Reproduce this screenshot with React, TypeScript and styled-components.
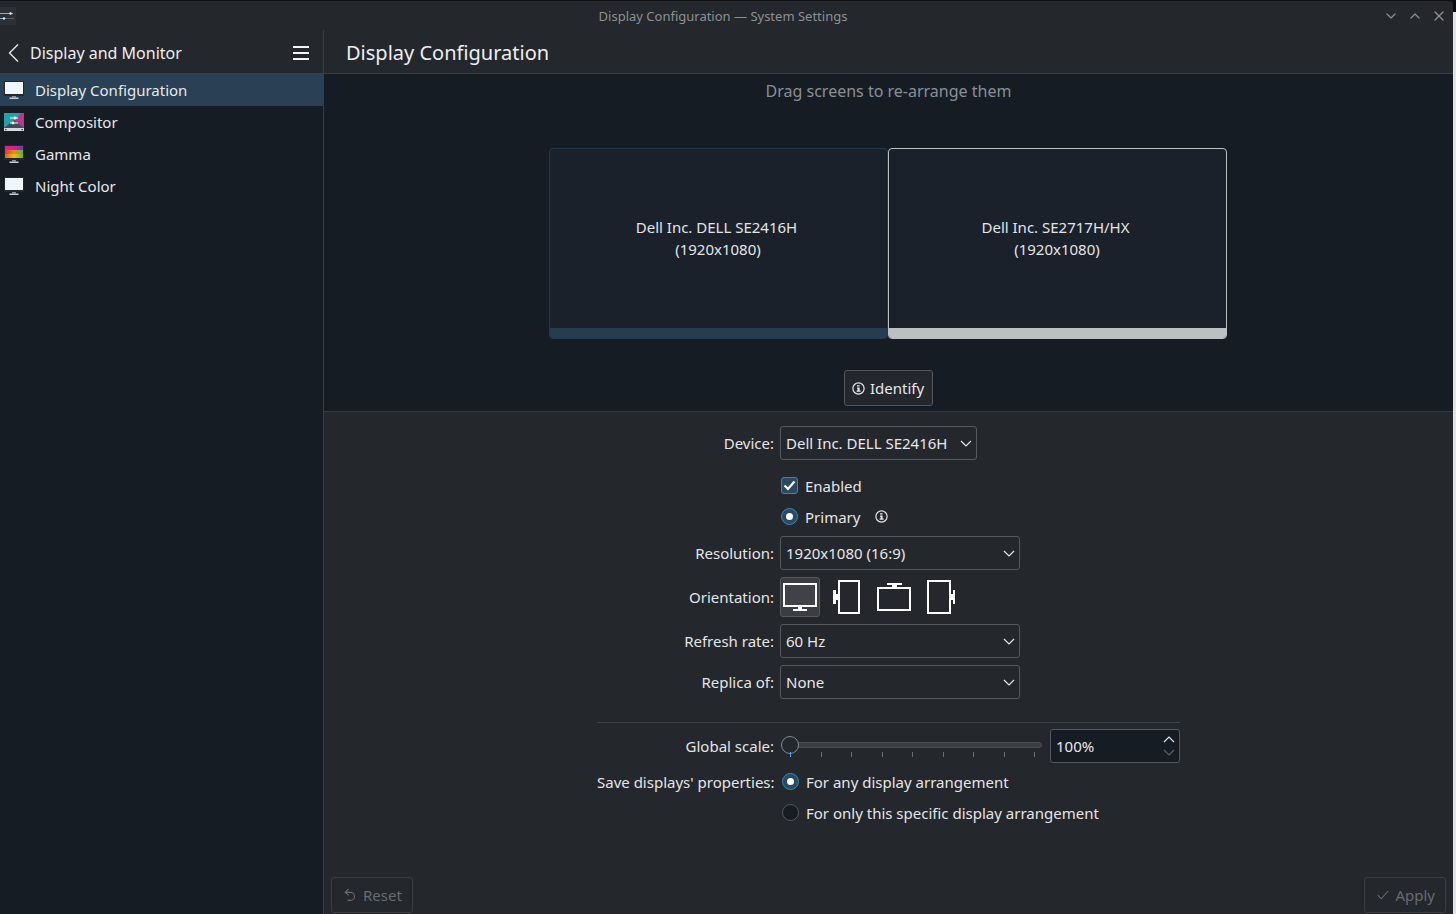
import styled, { createGlobalStyle } from "styled-components";
import { ChevronDown, ChevronUp, X } from "lucide-react";

const GlobalStyle = createGlobalStyle`
  html, body {
    margin: 0;
    padding: 0;
    background: #0c0d0f;
  }
  body {
    font-family: "Noto Sans", "Open Sans", sans-serif;
    font-size: 15px;
    color: #e6e8ea;
  }
  * {
    box-sizing: border-box;
  }
`;

const Screen = styled.div`
  display: flex;
  width: 1456px;
  height: 914px;
  overflow: hidden;
`;

const Window = styled.div`
  display: flex;
  flex-direction: column;
  width: 1453px;
  height: 914px;
  background: #24272c;
  border-top: 1px solid #111214;
  border-top-right-radius: 4px;
`;

const EdgeStrip = styled.div`
  width: 3px;
  background: linear-gradient(#0c0d0f 12px, #e4e5e7 12px);
`;

const TitleBar = styled.div`
  position: relative;
  flex: none;
  display: flex;
  align-items: center;
  justify-content: center;
  height: 29px;
  padding-right: 7px;
  font-size: 13px;
  color: #8d9093;
`;

const AppIcon = styled.svg`
  position: absolute;
  left: 0;
  top: 6px;
`;

const WindowButtons = styled.div`
  position: absolute;
  right: 6px;
  top: 7px;
  display: flex;
  gap: 8px;
  color: #8d9093;
`;

const Body = styled.div`
  flex: 1;
  display: flex;
  min-height: 0;
`;

const Sidebar = styled.aside`
  flex: none;
  display: flex;
  flex-direction: column;
  width: 324px;
  border-right: 1px solid #3a3d42;
  background: #161c24;
`;

const HeaderBar = styled.header`
  flex: none;
  display: flex;
  align-items: center;
  height: 44px;
  padding-top: 2px;
  background: #24272c;
  border-bottom: 1px solid #3a3d42;
`;

const BackButton = styled.span`
  display: flex;
  width: 30px;
  padding-left: 8px;
  color: #e6e8ea;
`;

const SidebarTitle = styled.span`
  flex: 1;
  font-size: 16px;
  color: #eceef0;
`;

const MenuButton = styled.span`
  display: flex;
  margin-right: 14px;
  color: #f4f5f6;
`;

const NavList = styled.nav`
  display: flex;
  flex-direction: column;
`;

const NavItem = styled.div<{ $active?: boolean }>`
  display: flex;
  align-items: center;
  gap: 11px;
  height: 32px;
  padding-left: 4px;
  background: ${(p) => (p.$active ? "#2a4054" : "transparent")};
  color: #e6e8ea;
`;

const Main = styled.main`
  flex: 1;
  display: flex;
  flex-direction: column;
  min-width: 0;
`;

const PageTitle = styled.h1`
  margin: 0;
  padding-left: 22px;
  font-size: 20px;
  font-weight: 400;
  color: #eceef0;
`;

const ArrangeView = styled.section`
  flex: none;
  display: flex;
  flex-direction: column;
  align-items: center;
  height: 338px;
  padding-top: 6px;
  background: #161c24;
  border-bottom: 1px solid #34373c;
`;

const Hint = styled.div`
  height: 22px;
  font-size: 16px;
  line-height: 22px;
  color: #8b8f93;
`;

const Monitors = styled.div`
  display: flex;
  margin-top: 46px;
  margin-right: 2px;
`;

const MonitorCard = styled.div<{ $selected?: boolean }>`
  display: flex;
  flex-direction: column;
  width: 339px;
  height: 191px;
  border: 1px solid ${(p) => (p.$selected ? "#bcc0c3" : "#243a4c")};
  border-radius: 4px;
  background: #1a212b;
  overflow: hidden;
`;

const MonitorLabel = styled.div`
  flex: 1;
  display: flex;
  flex-direction: column;
  align-items: center;
  justify-content: center;
  line-height: 22px;
  padding-bottom: 2px;
  color: #e3e5e7;
`;

const MonitorName = styled.span`
  margin-right: 3px;
`;

const MonitorFooter = styled.div<{ $selected?: boolean }>`
  flex: none;
  height: 10px;
  background: ${(p) => (p.$selected ? "#bcc0c3" : "#263d50")};
`;

const IdentifyButton = styled.button`
  display: flex;
  align-items: center;
  gap: 5px;
  height: 36px;
  margin-top: 31px;
  padding: 0 8px 0 7px;
  border: 1px solid #54575b;
  border-radius: 3px;
  background: #24272c;
  color: #e6e8ea;
  font: inherit;
`;

const FormArea = styled.section`
  flex: 1;
  position: relative;
  display: flex;
  justify-content: center;
  padding-top: 14px;
`;

const Form = styled.div`
  display: flex;
  flex-direction: column;
  width: 583px;
`;

const Row = styled.div<{ $height: number; $top?: number }>`
  display: grid;
  grid-template-columns: 177px 1fr;
  column-gap: 6px;
  align-items: center;
  height: ${(p) => p.$height}px;
  margin-top: ${(p) => p.$top ?? 0}px;
`;

const Label = styled.label`
  text-align: right;
  white-space: nowrap;
  color: #e3e5e7;
`;

const Combo = styled.div<{ $width: number }>`
  display: flex;
  align-items: center;
  justify-content: space-between;
  width: ${(p) => p.$width}px;
  height: 34px;
  padding: 0 4px 0 5px;
  border: 1px solid #55585c;
  border-radius: 3px;
  color: #e6e8ea;
`;

const OptionLine = styled.div<{ $indent?: number }>`
  display: flex;
  align-items: center;
  gap: 7px;
  padding-left: ${(p) => p.$indent ?? 1}px;
  color: #e3e5e7;
`;

const CheckBox = styled.span`
  display: flex;
  align-items: center;
  justify-content: center;
  width: 17px;
  height: 17px;
  border: 1px solid #3f84b0;
  border-radius: 3px;
  background: #2a4a62;
  color: #fcfcfc;
`;

const Radio = styled.span<{ $checked?: boolean }>`
  display: flex;
  align-items: center;
  justify-content: center;
  width: 17px;
  height: 17px;
  border: 1px solid ${(p) => (p.$checked ? "#3f84b0" : "#55585c")};
  border-radius: 50%;
  background: ${(p) => (p.$checked ? "#2a4a62" : "#161c24")};

  &::after {
    content: "";
    display: ${(p) => (p.$checked ? "block" : "none")};
    width: 7px;
    height: 7px;
    border-radius: 50%;
    background: #fcfcfc;
  }
`;

const InfoSlot = styled.span`
  display: flex;
  margin-left: 8px;
  color: #e3e5e7;
`;

const OrientationGroup = styled.div`
  display: flex;
  gap: 6px;
`;

const OrientationButton = styled.span<{ $active?: boolean }>`
  display: flex;
  align-items: center;
  justify-content: center;
  width: 40px;
  height: 40px;
  border: 1px solid ${(p) => (p.$active ? "#55585c" : "transparent")};
  border-radius: 3px;
  background: ${(p) => (p.$active ? "#3a3d42" : "transparent")};
  color: #fcfcfc;
`;

const Separator = styled.hr`
  width: 100%;
  height: 1px;
  margin: 23px 0 6px;
  border: 0;
  background: #3f4247;
`;

const ScaleControls = styled.div`
  display: flex;
  align-items: center;
  gap: 8px;
`;

const SliderBox = styled.div`
  position: relative;
  width: 262px;
  height: 34px;
`;

const SliderTrack = styled.div`
  position: absolute;
  left: 18px;
  right: 0;
  top: 13px;
  height: 6px;
  border-radius: 0 3px 3px 0;
  border: 1px solid #4a4d51;
  background: #3a3d41;
`;

const SliderThumb = styled.div`
  position: absolute;
  left: 1px;
  top: 7px;
  width: 18px;
  height: 18px;
  border: 1px solid #85888b;
  border-radius: 50%;
  background: #24272c;
`;

const Ticks = styled.div`
  position: absolute;
  left: 10px;
  width: 245px;
  top: 23px;
  display: flex;
  justify-content: space-between;
`;

const Tick = styled.span<{ $first?: boolean }>`
  width: 1px;
  height: 5px;
  background: ${(p) => (p.$first ? "#3daee9" : "#6a6d71")};
`;

const SpinBox = styled.div`
  display: flex;
  align-items: center;
  justify-content: space-between;
  width: 130px;
  height: 34px;
  padding: 0 4px 0 5px;
  border: 1px solid #55585c;
  border-radius: 3px;
  background: #161c24;
  color: #e6e8ea;
`;

const SpinArrows = styled.span`
  display: flex;
  flex-direction: column;
  gap: 6px;
  color: #e6e8ea;
`;

const SpinDownSlot = styled.span`
  display: flex;
  color: #5d6064;
`;

const FooterBar = styled.div`
  position: absolute;
  left: 7px;
  right: 7px;
  bottom: 1px;
  display: flex;
  justify-content: space-between;
`;

const FooterButton = styled.button`
  display: flex;
  align-items: center;
  gap: 6px;
  height: 36px;
  padding: 0 10px 0 12px;
  border: 1px solid #393c41;
  border-radius: 3px;
  background: #24272c;
  color: #686b6f;
  font: inherit;
`;

const InfoIcon = () => (
  <svg width="13" height="13" viewBox="0 0 13 13">
    <circle cx="6.5" cy="6.5" r="5.6" fill="none" stroke="currentColor" strokeWidth="1.2" />
    <path d="M5 3.2h2.6v1.4H5zM5 5.6h2.6v3h1v1.2H4.6V8.6h1V6.8H5z" fill="currentColor" />
  </svg>
);

const ArrowDown = () => (
  <svg width="12" height="7" viewBox="0 0 12 7" fill="none" stroke="currentColor" strokeWidth="1.2">
    <path d="M1 1l5 5 5-5" />
  </svg>
);

const ArrowUp = () => (
  <svg width="12" height="7" viewBox="0 0 12 7" fill="none" stroke="currentColor" strokeWidth="1.2">
    <path d="M1 6l5-5 5 5" />
  </svg>
);

const BackIcon = () => (
  <svg width="12" height="20" viewBox="0 0 12 20" fill="none" stroke="currentColor" strokeWidth="1.4">
    <path d="M10 1.5 1.5 10l8.5 8.5" />
  </svg>
);

const MenuIcon = () => (
  <svg width="16" height="14" viewBox="0 0 16 14" fill="currentColor">
    <rect x="0" y="0" width="16" height="2" />
    <rect x="0" y="6" width="16" height="2" />
    <rect x="0" y="12" width="16" height="2" />
  </svg>
);

const ResetIcon = () => (
  <svg width="13" height="14" viewBox="0 0 13 14" fill="none" stroke="currentColor" strokeWidth="1.1">
    <path d="M4.5 1 1.2 4.4 4.8 7.4M1.2 4.4H6.5a4 4 0 0 1 0 8H3.5" />
  </svg>
);

const ApplyIcon = () => (
  <svg width="12" height="10" viewBox="0 0 12 10" fill="none" stroke="currentColor" strokeWidth="1.1">
    <path d="M.8 5.2 4.2 8.8 11.2 1" />
  </svg>
);

const MonitorGlyph = ({ screen }: { screen: React.ReactNode }) => (
  <svg width="20" height="18" viewBox="0 0 20 18">
    <rect x="0" y="0" width="20" height="15" fill="#24272c" />
    {screen}
    <rect x="8" y="15" width="4" height="1.5" fill="#8b8f93" />
    <rect x="5.5" y="16.5" width="9" height="1.5" fill="#c8ccd0" />
  </svg>
);

const PlainScreen = () => <rect x="1" y="1" width="18" height="12" fill="#eef7fd" />;

const CompositorIcon = () => (
  <svg width="20" height="18" viewBox="0 0 20 18">
    <rect x="0" y="0" width="20" height="15" fill="#b53c88" />
    <polygon points="0,0 17,0 4,15 0,15" fill="#1fa3a8" />
    <polygon points="0,15 20,15 10,7" fill="#3d4c58" />
    <rect x="0" y="15" width="20" height="3" fill="#d6dade" />
    <rect x="1" y="16" width="1.5" height="1.2" fill="#3a3d42" />
    <rect x="17.5" y="16" width="1.5" height="1.2" fill="#3a3d42" />
    <rect x="6" y="4.5" width="8" height="1" fill="#fff" />
    <circle cx="11" cy="5" r="1.4" fill="#fff" />
    <rect x="6" y="9.5" width="8" height="1" fill="#fff" />
    <circle cx="9" cy="10" r="1.4" fill="#fff" />
  </svg>
);

const GammaScreen = () => (
  <>
    <defs>
      <linearGradient id="gammaTop" x1="0" y1="0" x2="1" y2="0">
        <stop offset="0" stopColor="#e81f8a" />
        <stop offset="0.55" stopColor="#c02a90" />
        <stop offset="1" stopColor="#6a3aa8" />
      </linearGradient>
      <linearGradient id="gammaMid" x1="0" y1="0" x2="1" y2="0">
        <stop offset="0" stopColor="#ee2a4a" />
        <stop offset="0.5" stopColor="#e88a20" />
        <stop offset="1" stopColor="#58b060" />
      </linearGradient>
      <linearGradient id="gammaLow" x1="0" y1="0" x2="1" y2="0">
        <stop offset="0" stopColor="#f05a10" />
        <stop offset="0.5" stopColor="#e8c018" />
        <stop offset="1" stopColor="#70b030" />
      </linearGradient>
    </defs>
    <rect x="1" y="1" width="18" height="4" fill="url(#gammaTop)" />
    <rect x="1" y="5" width="18" height="4" fill="url(#gammaMid)" />
    <rect x="1" y="9" width="18" height="4" fill="url(#gammaLow)" />
  </>
);

const SlidersIcon = () => (
  <AppIcon width="16" height="18" viewBox="0 0 16 18">
    <rect x="0" y="0" width="16" height="18" fill="#2c2f34" />
    <rect x="0" y="6" width="13" height="1" fill="#6fb4dc" />
    <circle cx="10.5" cy="6.5" r="1.2" fill="#eef2f4" />
    <rect x="0" y="11" width="14" height="1" fill="#5c6065" />
    <rect x="0" y="11" width="5" height="1" fill="#6fb4dc" />
    <circle cx="4" cy="11.5" r="1.2" fill="#eef2f4" />
  </AppIcon>
);

const LandscapeIcon = () => (
  <svg width="38" height="38" viewBox="0 0 38 38" fill="currentColor">
    <rect x="3" y="6" width="32" height="22" fill="#3f4246" stroke="currentColor" strokeWidth="2" />
    <rect x="17" y="29" width="4" height="2" />
    <rect x="12" y="31" width="14" height="2" />
  </svg>
);

const PortraitLeftIcon = () => (
  <svg width="38" height="38" viewBox="0 0 38 38" fill="currentColor">
    <rect x="12" y="3" width="20" height="32" fill="none" stroke="currentColor" strokeWidth="2" />
    <rect x="6" y="12" width="3" height="14" />
    <rect x="9" y="16" width="2" height="6" />
  </svg>
);

const FlippedIcon = () => (
  <svg width="38" height="38" viewBox="0 0 38 38" fill="currentColor">
    <rect x="5" y="10" width="32" height="22" fill="none" stroke="currentColor" strokeWidth="2" />
    <rect x="14" y="5" width="15" height="2" />
    <rect x="19" y="7" width="5" height="2" />
  </svg>
);

const PortraitRightIcon = () => (
  <svg width="38" height="38" viewBox="0 0 38 38" fill="currentColor">
    <rect x="9" y="3" width="22" height="32" fill="none" stroke="currentColor" strokeWidth="2" />
    <rect x="32" y="16" width="2" height="6" />
    <rect x="34" y="12" width="2" height="14" />
  </svg>
);

const navItems = [
  { label: "Display Configuration", icon: <MonitorGlyph screen={<PlainScreen />} />, active: true },
  { label: "Compositor", icon: <CompositorIcon /> },
  { label: "Gamma", icon: <MonitorGlyph screen={<GammaScreen />} /> },
  { label: "Night Color", icon: <MonitorGlyph screen={<PlainScreen />} /> },
];

const tickCount = 9;

export default function App() {
  return (
    <Screen>
      <GlobalStyle />
      <Window>
        <TitleBar>
          <SlidersIcon />
          Display Configuration — System Settings
          <WindowButtons>
            <ChevronDown size={16} strokeWidth={1.8} />
            <ChevronUp size={16} strokeWidth={1.8} />
            <X size={16} strokeWidth={1.8} />
          </WindowButtons>
        </TitleBar>
        <Body>
          <Sidebar>
            <HeaderBar>
              <BackButton>
                <BackIcon />
              </BackButton>
              <SidebarTitle>Display and Monitor</SidebarTitle>
              <MenuButton>
                <MenuIcon />
              </MenuButton>
            </HeaderBar>
            <NavList>
              {navItems.map((item) => (
                <NavItem key={item.label} $active={item.active}>
                  {item.icon}
                  {item.label}
                </NavItem>
              ))}
            </NavList>
          </Sidebar>
          <Main>
            <HeaderBar>
              <PageTitle>Display Configuration</PageTitle>
            </HeaderBar>
            <ArrangeView>
              <Hint>Drag screens to re-arrange them</Hint>
              <Monitors>
                <MonitorCard>
                  <MonitorLabel>
                    <MonitorName>Dell Inc. DELL SE2416H</MonitorName>
                    <span>(1920x1080)</span>
                  </MonitorLabel>
                  <MonitorFooter />
                </MonitorCard>
                <MonitorCard $selected>
                  <MonitorLabel>
                    <MonitorName>Dell Inc. SE2717H/HX</MonitorName>
                    <span>(1920x1080)</span>
                  </MonitorLabel>
                  <MonitorFooter $selected />
                </MonitorCard>
              </Monitors>
              <IdentifyButton>
                <InfoIcon />
                Identify
              </IdentifyButton>
            </ArrangeView>
            <FormArea>
              <Form>
                <Row $height={34}>
                  <Label>Device:</Label>
                  <Combo $width={197}>
                    Dell Inc. DELL SE2416H
                    <ArrowDown />
                  </Combo>
                </Row>
                <Row $height={31} $top={10}>
                  <span />
                  <OptionLine>
                    <CheckBox>
                      <svg width="13" height="11" viewBox="0 0 13 11" fill="none" stroke="currentColor" strokeWidth="2.2">
                        <path d="M1.5 5.5 5 9l6.5-7.5" />
                      </svg>
                    </CheckBox>
                    Enabled
                  </OptionLine>
                </Row>
                <Row $height={31}>
                  <span />
                  <OptionLine>
                    <Radio $checked />
                    Primary
                    <InfoSlot>
                      <InfoIcon />
                    </InfoSlot>
                  </OptionLine>
                </Row>
                <Row $height={34} $top={4}>
                  <Label>Resolution:</Label>
                  <Combo $width={240}>
                    1920x1080 (16:9)
                    <ArrowDown />
                  </Combo>
                </Row>
                <Row $height={40} $top={7}>
                  <Label>Orientation:</Label>
                  <OrientationGroup>
                    <OrientationButton $active>
                      <LandscapeIcon />
                    </OrientationButton>
                    <OrientationButton>
                      <PortraitLeftIcon />
                    </OrientationButton>
                    <OrientationButton>
                      <FlippedIcon />
                    </OrientationButton>
                    <OrientationButton>
                      <PortraitRightIcon />
                    </OrientationButton>
                  </OrientationGroup>
                </Row>
                <Row $height={34} $top={7}>
                  <Label>Refresh rate:</Label>
                  <Combo $width={240}>
                    60 Hz
                    <ArrowDown />
                  </Combo>
                </Row>
                <Row $height={34} $top={7}>
                  <Label>Replica of:</Label>
                  <Combo $width={240}>
                    None
                    <ArrowDown />
                  </Combo>
                </Row>
                <Separator />
                <Row $height={34}>
                  <Label>Global scale:</Label>
                  <ScaleControls>
                    <SliderBox>
                      <SliderTrack />
                      <SliderThumb />
                      <Ticks>
                        {Array.from({ length: tickCount }, (_, i) => (
                          <Tick key={i} $first={i === 0} />
                        ))}
                      </Ticks>
                    </SliderBox>
                    <SpinBox>
                      100%
                      <SpinArrows>
                        <ArrowUp />
                        <SpinDownSlot>
                          <ArrowDown />
                        </SpinDownSlot>
                      </SpinArrows>
                    </SpinBox>
                  </ScaleControls>
                </Row>
                <Row $height={31} $top={3}>
                  <Label>Save displays' properties:</Label>
                  <OptionLine $indent={2}>
                    <Radio $checked />
                    For any display arrangement
                  </OptionLine>
                </Row>
                <Row $height={31}>
                  <span />
                  <OptionLine $indent={2}>
                    <Radio />
                    For only this specific display arrangement
                  </OptionLine>
                </Row>
              </Form>
              <FooterBar>
                <FooterButton>
                  <ResetIcon />
                  Reset
                </FooterButton>
                <FooterButton>
                  <ApplyIcon />
                  Apply
                </FooterButton>
              </FooterBar>
            </FormArea>
          </Main>
        </Body>
      </Window>
      <EdgeStrip />
    </Screen>
  );
}
